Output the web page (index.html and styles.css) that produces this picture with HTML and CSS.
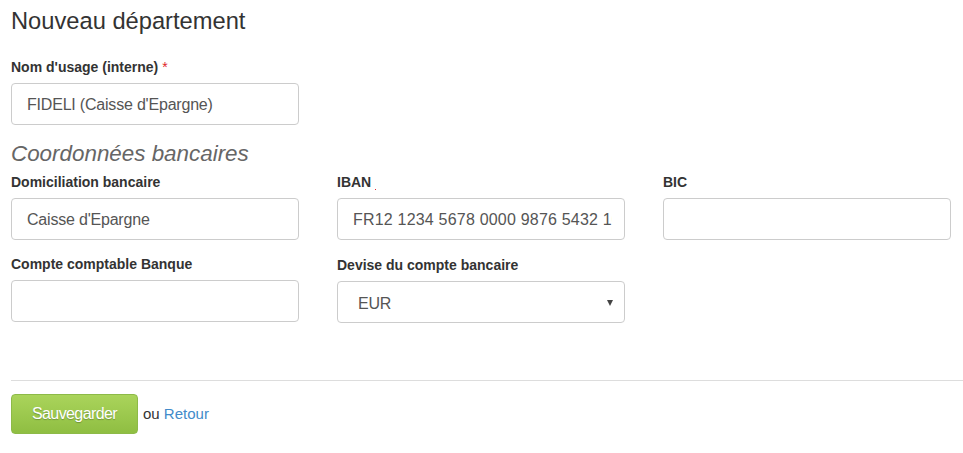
FILE: index.html
```html
<!DOCTYPE html>
<html lang="fr">
<head>
<meta charset="utf-8">
<title>Nouveau département</title>
<link rel="stylesheet" href="styles.css">
</head>
<body>
<div class="page">
  <h1 class="title">Nouveau département</h1>
  <div class="field single">
    <label class="label">Nom d'usage (interne) <span class="req">*</span></label>
    <input class="input" type="text" value="FIDELI (Caisse d'Epargne)">
  </div>
  <h2 class="section">Coordonnées bancaires</h2>
  <div class="grid">
    <div class="field">
      <label class="label">Domiciliation bancaire</label>
      <input class="input" type="text" value="Caisse d'Epargne">
    </div>
    <div class="field">
      <label class="label">IBAN <span class="dot"></span></label>
      <input class="input input-iban" type="text" value="FR12 1234 5678 0000 9876 5432 10">
    </div>
    <div class="field">
      <label class="label">BIC</label>
      <input class="input" type="text" value="">
    </div>
    <div class="field">
      <label class="label">Compte comptable Banque</label>
      <input class="input" type="text" value="">
    </div>
    <div class="field shifted">
      <label class="label">Devise du compte bancaire</label>
      <div class="select-wrap">
        <select class="input select">
          <option>EUR</option>
        </select>
      </div>
    </div>
  </div>
  <hr class="rule">
  <div class="actions">
    <button class="btn" type="button">Sauvegarder</button>
    <span class="or">ou <a class="link" href="#">Retour</a></span>
  </div>
</div>
</body>
</html>
```
FILE: styles.css
```css
html, body {
  margin: 0;
  padding: 0;
  background: #fff;
}
body {
  font-family: "Liberation Sans", Arial, sans-serif;
  color: #333;
}
.page {
  padding: 0 0 0 11px;
}
.title {
  font-size: 23.7px;
  font-weight: normal;
  line-height: 24px;
  margin: 9px 0 24px;
  color: #333;
}
.field {
  display: flex;
  flex-direction: column;
}
.field.single {
  width: 288px;
}
.label {
  display: block;
  font-weight: bold;
  font-size: 14px;
  line-height: 20px;
  margin-bottom: 6px;
  color: #333;
}
.req {
  color: #e0262b;
  font-weight: normal;
}
.dot {
  display: inline-block;
  width: 1px;
  height: 1px;
  background: #e0262b;
  vertical-align: -3px;
}
.input {
  box-sizing: border-box;
  width: 100%;
  height: 42px;
  border: 1px solid #ccc;
  border-radius: 4px;
  padding: 2px 12px 0 15px;
  font-family: "Liberation Sans", Arial, sans-serif;
  font-size: 16px;
  letter-spacing: -0.2px;
  color: #555;
  background: #fff;
  outline: none;
  margin: 0;
}
.input-iban {
  letter-spacing: 0.2px;
}
.section {
  font-size: 22.4px;
  font-style: italic;
  font-weight: normal;
  line-height: 24px;
  color: #666;
  margin: 17px 0 6px;
}
.grid {
  display: grid;
  grid-template-columns: repeat(3, 288px);
  column-gap: 38px;
  row-gap: 14px;
}
.shifted {
  padding-top: 1px;
}
.select-wrap {
  position: relative;
}
.select {
  -webkit-appearance: none;
  appearance: none;
  padding-left: 20px;
}
.select-wrap::after {
  content: "";
  position: absolute;
  right: 12px;
  top: 19px;
  border-left: 3.5px solid transparent;
  border-right: 3.5px solid transparent;
  border-top: 6px solid #444;
}
.rule {
  border: 0;
  border-top: 1px solid #ddd;
  margin: 57px 0 13px;
  height: 0;
}
.actions {
  display: flex;
  align-items: center;
}
.btn {
  box-sizing: border-box;
  width: 127px;
  height: 40px;
  border: 1px solid #8dba48;
  border-radius: 4px;
  background: linear-gradient(#aad45b, #8fbe42);
  color: #fff;
  font-family: "Liberation Sans", Arial, sans-serif;
  font-size: 16px;
  letter-spacing: -0.6px;
  text-shadow: 0 1px 1px rgba(0, 0, 0, 0.25);
  padding: 0;
  margin: 0;
  cursor: pointer;
}
.or {
  margin-left: 5px;
  font-size: 15px;
  color: #333;
  margin-top: -2px;
}
.link {
  color: #428bca;
  text-decoration: none;
}
```
